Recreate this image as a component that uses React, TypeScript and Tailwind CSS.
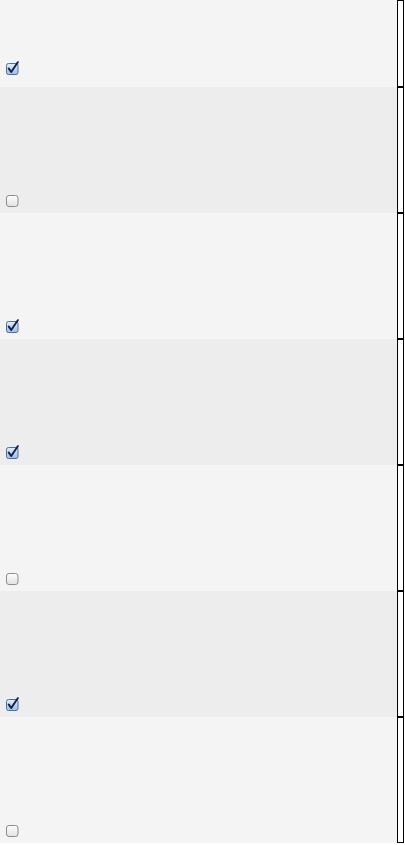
const rows = [
  { checked: true, first: true },
  { checked: false },
  { checked: true },
  { checked: true },
  { checked: false },
  { checked: true },
  { checked: false },
]

function CheckBox({ checked }: { checked: boolean }) {
  if (checked) {
    return (
      <svg width="15" height="15" viewBox="0 0 15 15" className="block">
        <defs>
          <linearGradient id="cbOn" x1="0" y1="0" x2="0" y2="1">
            <stop offset="0" stopColor="#e4eefa" />
            <stop offset="1" stopColor="#9fbde4" />
          </linearGradient>
        </defs>
        <rect x="1.5" y="2.5" width="11.5" height="11" rx="2" fill="url(#cbOn)" stroke="#4f6f9c" />
        <path d="M3.8 7.6 L6.2 11 L12.8 1.2" fill="none" stroke="#14224f" strokeWidth="2" strokeLinecap="round" strokeLinejoin="round" />
      </svg>
    )
  }
  return (
    <svg width="15" height="15" viewBox="0 0 15 15" className="block">
      <defs>
        <linearGradient id="cbOff" x1="0" y1="0" x2="0" y2="1">
          <stop offset="0" stopColor="#fdfdfd" />
          <stop offset="1" stopColor="#e2e2e2" />
        </linearGradient>
      </defs>
      <rect x="1.5" y="2.5" width="11.5" height="11" rx="2.5" fill="url(#cbOff)" stroke="#8c8c8c" />
    </svg>
  )
}

export default function App() {
  return (
    <div className="w-[405px] h-[845px] bg-white overflow-hidden">
      {rows.map((row, i) => (
        <div key={i} className={`flex ${row.first ? 'h-[87px]' : 'h-[126px]'}`}>
          <div
            className={`flex-1 flex items-end pl-[5px] ${i % 2 === 0 ? 'bg-[#f4f4f4]' : 'bg-[#ededed]'} ${row.first ? 'pb-[11px]' : 'pb-[5px]'}`}
          >
            <CheckBox checked={row.checked} />
          </div>
          <div className="w-[7px] border border-black bg-white" />
          <div className="w-px" />
        </div>
      ))}
    </div>
  )
}
